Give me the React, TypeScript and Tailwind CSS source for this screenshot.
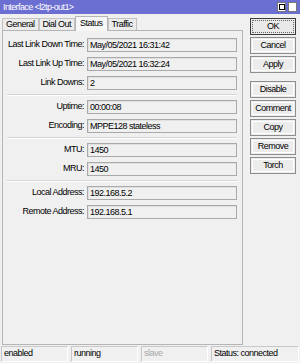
const font = "font-['Liberation_Sans',Arial,sans-serif]";

const groups: [string, string][][] = [
  [
    ['Last Link Down Time:', 'May/05/2021 16:31:42'],
    ['Last Link Up Time:', 'May/05/2021 16:32:24'],
    ['Link Downs:', '2'],
  ],
  [
    ['Uptime:', '00:00:08'],
    ['Encoding:', 'MPPE128 stateless'],
  ],
  [
    ['MTU:', '1450'],
    ['MRU:', '1450'],
  ],
  [
    ['Local Address:', '192.168.5.2'],
    ['Remote Address:', '192.168.5.1'],
  ],
];

const tabs = ['General', 'Dial Out', 'Status', 'Traffic'];

function Field({ label, value }: { label: string; value: string }) {
  return (
    <div className="flex items-center h-[14px]">
      <div className="w-[81px] text-right whitespace-nowrap">{label}</div>
      <div className="ml-[3px] mr-[5px] flex-1 h-[14px] border border-[#a9a9a9] bg-[#f0f0f0] shadow-[inset_1px_1px_0_#e0e0e0] px-[2px] leading-[12px] whitespace-nowrap">
        {value}
      </div>
    </div>
  );
}

function Btn({ children, primary }: { children: string; primary?: boolean }) {
  return (
    <div
      className={
        primary
          ? 'h-[17px] border border-[#3c3c3c] bg-[#e9e9e9] p-[1px]'
          : 'h-[17px] border border-[#8e8e8e] bg-[#ececec] p-[1px]'
      }
    >
      <div
        className={
          primary
            ? 'h-full border border-dotted border-[#666] flex items-center justify-center'
            : 'h-full border border-white flex items-center justify-center'
        }
      >
        {children}
      </div>
    </div>
  );
}

export default function App() {
  return (
    <div className={`w-[300px] h-[363px] bg-[#f0f0f0] flex flex-col text-[9px] tracking-[-0.5px] text-black ${font}`}>
      {/* title bar */}
      <div className="h-[14px] bg-[#6b6fd1] flex items-center pl-[3px] pr-[3px] text-white tracking-[-0.6px]">
        <span className="flex-1 leading-none">Interface &lt;l2tp-out1&gt;</span>
        <div className="flex gap-[2px]">
          <div className="w-[9px] h-[10px] bg-white border border-[#777] flex items-center justify-center">
            <div className="w-[6px] h-[6px] border border-black" />
          </div>
          <div className="w-[9px] h-[10px] bg-white border border-[#777] flex items-center justify-center text-[9px] font-bold leading-none tracking-normal">
            ×
          </div>
        </div>
      </div>

      <div className="flex flex-1 min-h-0">
        {/* left: tabs + panel */}
        <div className="w-[241px] ml-[2px] flex flex-col">
          <div className="h-[16px] flex items-end">
            {tabs.map((t) =>
              t === 'Status' ? (
                <div
                  key={t}
                  className="h-[15px] px-[4px] -mb-[1px] relative z-10 border border-b-0 border-[#b5b5b5] bg-[#f7f7f7] flex items-center"
                >
                  {t}
                </div>
              ) : (
                <div
                  key={t}
                  className="h-[12px] px-[3px] border border-b-0 border-[#c2c2c2] bg-[#ececec] flex items-center"
                >
                  {t}
                </div>
              )
            )}
          </div>
          <div className="flex-1 border border-[#b5b5b5] pt-[7px]">
            {groups.map((g, i) => (
              <div key={i}>
                {i > 0 && (
                  <div className="ml-[4px] mr-[5px] mt-[4px] mb-[4px] border-t border-[#d5d5d5] border-b border-b-white" />
                )}
                <div className="flex flex-col gap-[5px]">
                  {g.map(([l, v]) => (
                    <Field key={l} label={l} value={v} />
                  ))}
                </div>
              </div>
            ))}
          </div>
        </div>

        {/* right: buttons */}
        <div className="w-[46px] ml-[7px] pt-[4px] flex flex-col gap-[2px]">
          <Btn primary>OK</Btn>
          <Btn>Cancel</Btn>
          <Btn>Apply</Btn>
          <div className="h-[4px]" />
          <Btn>Disable</Btn>
          <Btn>Comment</Btn>
          <Btn>Copy</Btn>
          <Btn>Remove</Btn>
          <Btn>Torch</Btn>
        </div>
      </div>

      {/* status bar */}
      <div className="h-[17px] mt-[1px] flex gap-[3px] px-[1px] pb-[1px]">
        <div className="w-[67px] border border-[#c8c8c8] border-r-white border-b-white px-[2px] flex items-center">enabled</div>
        <div className="w-[67px] border border-[#c8c8c8] border-r-white border-b-white px-[2px] flex items-center">running</div>
        <div className="w-[67px] border border-[#c8c8c8] border-r-white border-b-white px-[2px] flex items-center text-[#a8a8a8]">slave</div>
        <div className="flex-1 border border-[#c8c8c8] border-r-white border-b-white px-[2px] flex items-center">Status: connected</div>
      </div>
    </div>
  );
}
